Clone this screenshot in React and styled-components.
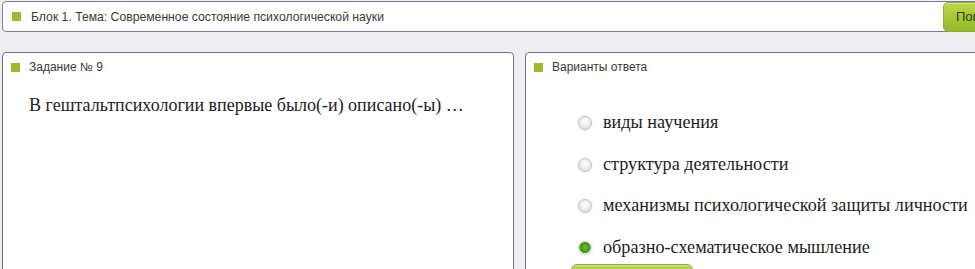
import React from "react";
import styled, { createGlobalStyle } from "styled-components";

const Global = createGlobalStyle`
  html, body { margin: 0; padding: 0; }
  body {
    background: #eeeef1;
    overflow: hidden;
    font-family: "Liberation Sans", Arial, sans-serif;
  }
`;

const Page = styled.div`
  width: 1062px;
  padding: 1px 0 0 2px;
  display: flex;
  flex-direction: column;
  gap: 20px;
`;

const TopBar = styled.div`
  height: 29px;
  background: #fff;
  border: 1px solid #7c7cae;
  border-radius: 4px;
  display: flex;
  align-items: center;
  padding-left: 9px;
  gap: 10px;
`;

const Marker = styled.span`
  width: 9px;
  height: 9px;
  background: #9bbb2c;
  flex: none;
`;

const Title = styled.span`
  font-size: 12.2px;
  color: #3a3a3a;
  flex: 1;
`;

const GreenButton = styled.button`
  font-family: "Liberation Sans", Arial, sans-serif;
  font-size: 13px;
  color: #2e3a10;
  border: 1px solid #8fad2a;
  border-radius: 5px;
  background: linear-gradient(#bcd84a, #94b826);
  box-shadow: inset 0 1px 0 rgba(255,255,255,0.35);
  height: ${(p) => p.$h}px;
  width: ${(p) => p.$w}px;
  padding: 0 0 0 ${(p) => p.$pl}px;
  text-align: left;
  flex: none;
`;

const Row = styled.div`
  display: flex;
  gap: 11px;
  align-items: flex-start;
`;

const Panel = styled.div`
  flex: none;
  width: ${(p) => p.$w}px;
  min-height: 300px;
  background: #fff;
  border: 1px solid #7070a8;
  border-radius: 4px 4px 0 0;
  box-sizing: border-box;
  padding: 0 0 0 8px;
  display: flex;
  flex-direction: column;
  align-items: flex-start;
`;

const PanelHead = styled.div`
  display: flex;
  align-items: center;
  gap: 9px;
  height: 28px;
  flex: none;
`;

const HeadText = styled.span`
  font-size: 12px;
  color: #3a3a3a;
`;

const Question = styled.div`
  font-family: "Liberation Serif", "Times New Roman", serif;
  font-size: 18px;
  color: #222;
  padding: 14px 0 0 18px;
  white-space: nowrap;
`;

const Options = styled.div`
  display: flex;
  flex-direction: column;
  gap: 20px;
  padding: 31px 0 0 44px;
  flex: none;
`;

const Option = styled.label`
  display: flex;
  align-items: center;
  gap: 11px;
  height: 21.5px;
  font-family: "Liberation Serif", "Times New Roman", serif;
  font-size: 18.2px;
  color: #1e1e1e;
  white-space: nowrap;
`;

const Radio = styled.span`
  width: 14px;
  height: 14px;
  border-radius: 50%;
  box-sizing: border-box;
  flex: none;
  margin-top: 1px;
  border: 1px solid ${(p) => (p.$on ? "#d4d4d4" : "#c4c4c4")};
  background: ${(p) =>
    p.$on
      ? "radial-gradient(circle at 50% 45%, #78c840 0, #4aa21c 3px, #3d9612 5.2px, #eef2ea 6px, #e4e4e4 7px)"
      : "radial-gradient(circle at 50% 40%, #ffffff 0, #f4f4f4 3px, #dedede 7px)"};
  box-shadow: 0 0 1px 1px rgba(0,0,0,0.06);
`;

const Submit = styled(GreenButton)`
  margin: 6px 0 0 37px;
  border-radius: 6px;
  text-align: center;
`;

const options = [
  { text: "виды научения", on: false },
  { text: "структура деятельности", on: false },
  { text: "механизмы психологической защиты личности", on: false },
  { text: "образно-схематическое мышление", on: true },
];

export default function App() {
  return (
    <>
      <Global />
      <Page>
        <TopBar>
          <Marker />
          <Title>Блок 1. Тема: Современное состояние психологической науки</Title>
          <GreenButton $h={30} $w={120} $pl={12}>Попробовать</GreenButton>
        </TopBar>
        <Row>
          <Panel $w={512}>
            <PanelHead>
              <Marker />
              <HeadText>Задание № 9</HeadText>
            </PanelHead>
            <Question>В гештальтпсихологии впервые было(-и) описано(-ы) …</Question>
          </Panel>
          <Panel $w={520}>
            <PanelHead>
              <Marker />
              <HeadText>Варианты ответа</HeadText>
            </PanelHead>
            <Options>
              {options.map((o) => (
                <Option key={o.text}>
                  <Radio $on={o.on} />
                  {o.text}
                </Option>
              ))}
            </Options>
            <Submit $h={34} $w={122} $pl={0}>Ответить</Submit>
          </Panel>
        </Row>
      </Page>
    </>
  );
}
